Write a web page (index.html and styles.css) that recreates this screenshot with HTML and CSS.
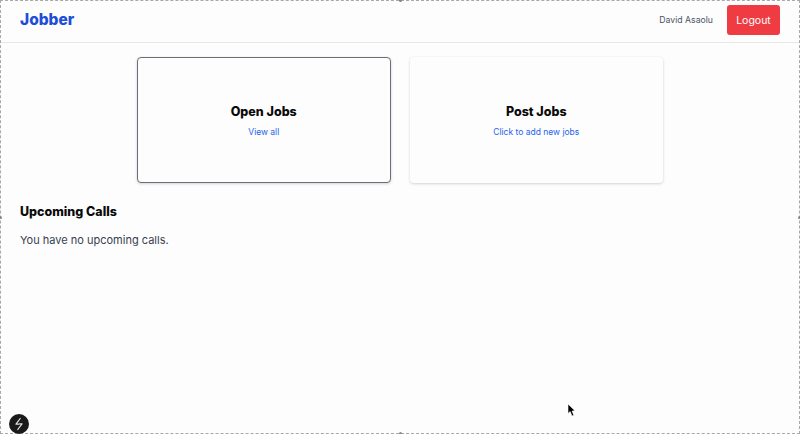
FILE: index.html
```html
<!DOCTYPE html>
<html lang="en">
<head>
<meta charset="utf-8">
<title>Jobber</title>
<link rel="stylesheet" href="styles.css">
</head>
<body>
<header class="nav">
  <a class="brand">Jobber</a>
  <div class="nav-right">
    <span class="user">David Asaolu</span>
    <button class="logout">Logout</button>
  </div>
</header>
<main class="main">
  <section class="cards">
    <div class="card card-active">
      <h3 class="card-title">Open Jobs</h3>
      <a class="card-link">View all</a>
    </div>
    <div class="card">
      <h3 class="card-title">Post Jobs</h3>
      <a class="card-link">Click to add new jobs</a>
    </div>
  </section>
  <section class="calls">
    <h2 class="calls-title">Upcoming Calls</h2>
    <p class="calls-text">You have no upcoming calls.</p>
  </section>
</main>
<div class="frame">
  <i class="handle h-top"></i><i class="handle h-bottom"></i><i class="handle h-left"></i><i class="handle h-right"></i>
</div>
<div class="next-badge">
  <svg viewBox="0 0 20 20" width="20" height="20"><path d="M11.2 4.5 L7 10.2 H9.5 M8.8 15.5 L13 9.8 H10.5" fill="none" stroke="#e4e4e4" stroke-width="1.2" stroke-linejoin="round" stroke-linecap="round"/></svg>
</div>
<svg class="cursor" viewBox="0 0 10 15" width="10" height="15"><path d="M1 1 L1 10.5 L3.2 8.6 L5 13 L6.8 12.2 L5.1 8 L8 7.8 Z" fill="#000" stroke="#fff" stroke-width=".6"/></svg>
</body>
</html>
```
FILE: styles.css
```css
* { box-sizing: border-box; }
html, body { height: 100%; }
body {
  margin: 0;
  height: 434px;
  overflow: hidden;
  background: #fdfdfd;
  font-family: "Inter", "Liberation Sans", sans-serif;
  color: #1f2937;
  position: relative;
}
.nav {
  height: 43px;
  display: flex;
  align-items: center;
  justify-content: space-between;
  padding: 0 20px;
  border-bottom: 1px solid #e8e8e9;
}
.brand {
  font-size: 15.5px;
  font-weight: 800;
  color: #1d4ed8;
  margin-top: -3px;
}
.nav-right {
  display: flex;
  align-items: center;
  gap: 14px;
}
.user {
  font-size: 8.7px;
  color: #4b5563;
  margin-top: -2px;
}
.logout {
  width: 53px;
  height: 30px;
  border: 0;
  border-radius: 3px;
  background: #ef3b42;
  color: #fff;
  font: 400 10.5px "Inter", "Liberation Sans", sans-serif;
  padding: 0;
  margin-top: -2px;
}
.main { padding: 14px 20px 0; }
.cards {
  display: flex;
  justify-content: center;
  gap: 19px;
}
.card {
  width: 253.5px;
  height: 126px;
  border-radius: 4px;
  background: #fdfdfe;
  box-shadow: 0 1px 3px rgba(0,0,0,.16), 0 0 2px rgba(0,0,0,.03);
  display: flex;
  flex-direction: column;
  align-items: center;
  justify-content: center;
  gap: 5px;
  padding-top: 3px;
}
.card-active {
  border: 1px solid #6b6f7a;
}
.card-title {
  margin: 0;
  font-size: 12.5px;
  line-height: 16px;
  font-weight: 800;
  color: #0a0a0a;
}
.card-link {
  font-size: 8.5px;
  line-height: 14px;
  color: #2563eb;
}
.calls { margin-top: 20px; }
.calls-title {
  margin: 0;
  font-size: 12.5px;
  line-height: 17px;
  font-weight: 800;
  color: #0a0a0a;
}
.calls-text {
  margin: 12px 0 0;
  font-size: 11px;
  line-height: 16px;
  color: #374151;
}
.frame {
  position: absolute;
  inset: 0;
  border: 1px dashed #a8a8a8;
  pointer-events: none;
}
.handle {
  position: absolute;
  width: 3px;
  height: 3px;
  border-radius: 50%;
  background: #888;
}
.h-top { top: -2px; left: 398px; }
.h-bottom { bottom: -2px; left: 398px; }
.h-left { left: -2px; top: 215px; }
.h-right { right: -2px; top: 215px; }
.next-badge {
  position: absolute;
  left: 9px;
  bottom: 0;
  width: 20px;
  height: 20px;
  border-radius: 50%;
  background: #1a1a1a;
}
.next-badge svg { display: block; }
.cursor {
  position: absolute;
  left: 567px;
  top: 403px;
}
```
